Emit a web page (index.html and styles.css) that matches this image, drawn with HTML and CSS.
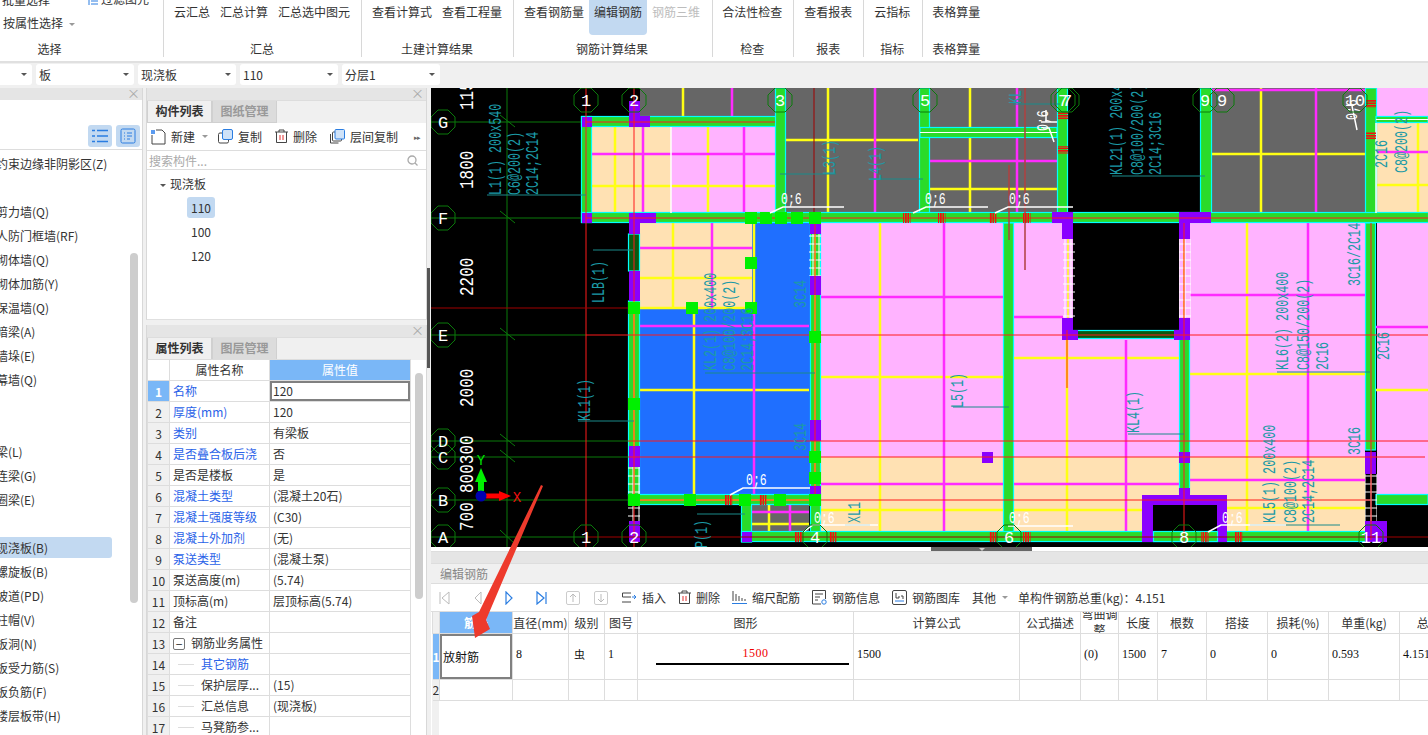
FILE: index.html
```html
<!DOCTYPE html>
<html lang="zh-CN">
<head>
    <meta charset="UTF-8">
    <title>编辑钢筋</title>
    <link rel="stylesheet" href="styles.css">
</head>
<body>
    <!-- 顶部功能区 -->
    <div class="ribbon">
        <div class="group group-select">
            <div class="select-rows">
                <div class="select-row select-row-top"><span>批量选择</span>
                    <span class="filter-item"><svg width="11" height="12" viewBox="0 0 11 12"><path d="M1 0v12M3 2h7M3 5h7M3 8h7M3 11h7" stroke="#2a7de1" fill="none"/></svg>过滤图元</span>
                </div>
                <div class="select-row">按属性选择<i class="caret"></i></div>
            </div>
            <div class="group-name">选择</div>
        </div>
        <div class="group">
            <div class="btns"><span class="btn">云汇总</span><span class="btn">汇总计算</span><span class="btn">汇总选中图元</span></div>
            <div class="group-name">汇总</div>
        </div>
        <div class="group">
            <div class="btns"><span class="btn">查看计算式</span><span class="btn">查看工程量</span></div>
            <div class="group-name">土建计算结果</div>
        </div>
        <div class="group group-wide">
            <div class="btns"><span class="btn">查看钢筋量</span><span class="btn active">编辑钢筋</span><span class="btn disabled">钢筋三维</span></div>
            <div class="group-name">钢筋计算结果</div>
        </div>
        <div class="group group-tight">
            <div class="btns"><span class="btn">合法性检查</span></div>
            <div class="group-name">检查</div>
        </div>
        <div class="group">
            <div class="btns"><span class="btn">查看报表</span></div>
            <div class="group-name">报表</div>
        </div>
        <div class="group group-wide">
            <div class="btns"><span class="btn">云指标</span></div>
            <div class="group-name">指标</div>
        </div>
        <div class="group last">
            <div class="btns"><span class="btn">表格算量</span></div>
            <div class="group-name">表格算量</div>
        </div>
    </div>

    <!-- 下拉条 -->
    <div class="combo-bar">
        <div class="combo combo-first"><i class="caret dark"></i></div>
        <div class="combo">板<i class="caret dark"></i></div>
        <div class="combo">现浇板<i class="caret dark"></i></div>
        <div class="combo">110<i class="caret dark"></i></div>
        <div class="combo">分层1<i class="caret dark"></i></div>
    </div>

    <div class="main">
        <!-- 导航树 -->
        <div class="nav-panel">
            <div class="panel-head"><span class="close">×</span></div>
            <div class="nav-tools">
                <span class="tool-toggle"><svg width="16" height="14" viewBox="0 0 16 14"><path d="M0 1.500h3M5 1.500h11M0 7h3M5 7h11M0 12.500h3M5 12.500h11" stroke="#2a7de1" fill="none" stroke-width="1.400"/></svg></span>
                <span class="tool-toggle"><svg width="16" height="16" viewBox="0 0 16 16"><rect x="1" y="1" width="14" height="14" rx="1.500" stroke="#2a7de1" fill="none"/><path d="M4 5h1M7 5h5M4 8h1M7 8h5M4 11h1M7 11h3" stroke="#2a7de1" fill="none"/></svg></span>
            </div>
            <ul class="nav-list">
                <li>约束边缘非阴影区(Z)</li>
                <li>&nbsp;</li>
                <li>剪力墙(Q)</li>
                <li>人防门框墙(RF)</li>
                <li>砌体墙(Q)</li>
                <li>砌体加筋(Y)</li>
                <li>保温墙(Q)</li>
                <li>暗梁(A)</li>
                <li>墙垛(E)</li>
                <li>幕墙(Q)</li>
                <li>&nbsp;</li>
                <li>&nbsp;</li>
                <li>梁(L)</li>
                <li>连梁(G)</li>
                <li>圈梁(E)</li>
                <li>&nbsp;</li>
                <li class="selected">现浇板(B)</li>
                <li>螺旋板(B)</li>
                <li>坡道(PD)</li>
                <li>柱帽(V)</li>
                <li>板洞(N)</li>
                <li>板受力筋(S)</li>
                <li>板负筋(F)</li>
                <li>楼层板带(H)</li>
            </ul>
            <div class="nav-scroll"></div>
        </div>

        <!-- 构件列表 + 属性列表 -->
        <div class="mid-col">
            <div class="panel panel-parts">
                <div class="panel-head"><span class="close">×</span></div>
                <div class="tabs"><span class="tab on">构件列表</span><span class="tab">图纸管理</span></div>
                <div class="parts-tools">
                    <span class="ptool"><svg width="15" height="16" viewBox="0 0 15 16"><rect x="0" y="1" width="4" height="4" fill="#5b9bf0"/><path d="M1 6v9h13V4l-3-3H5" stroke="#444" fill="none"/></svg>新建<i class="caret"></i></span>
                    <span class="ptool"><svg width="15" height="15" viewBox="0 0 15 15"><rect x="0.500" y="4" width="10" height="10" rx="1.500" stroke="#444" fill="#fff"/><rect x="4.500" y="0.500" width="10" height="10" rx="1.500" stroke="#2a7de1" fill="#cfe2f8"/></svg>复制</span>
                    <span class="ptool"><svg width="13" height="15" viewBox="0 0 13 15"><path d="M0 3h13M4 3V1h5v2M1.500 3v10.500h10V3" stroke="#444" fill="none"/><path d="M5 6v5M8 6v5" stroke="#e23030" fill="none"/></svg>删除</span>
                    <span class="ptool"><svg width="15" height="15" viewBox="0 0 15 15"><path d="M0.500 5v9h8" stroke="#444" fill="none"/><rect x="2.500" y="3" width="9" height="9" rx="1" stroke="#444" fill="#fff"/><rect x="5" y="0.500" width="9.500" height="9.500" rx="1" stroke="#2a7de1" fill="#cfe2f8"/></svg>层间复制</span>
                    <span class="more">▸▸</span>
                </div>
                <div class="search">
                    <span>搜索构件...</span>
                    <svg width="11" height="11" viewBox="0 0 11 11"><circle cx="5" cy="5" r="4" stroke="#aaa" fill="none" stroke-width="1.300"/><path d="M8 8l2.500 2.500" stroke="#aaa" stroke-width="1.300"/></svg>
                </div>
                <div class="part-tree">
                    <div class="tree-root"><i class="caret dark"></i>现浇板</div>
                    <div class="tree-leaf"><span class="leaf on">110</span></div>
                    <div class="tree-leaf"><span class="leaf">100</span></div>
                    <div class="tree-leaf"><span class="leaf">120</span></div>
                </div>
            </div>
            <div class="panel panel-props">
                <div class="panel-head"><span class="close">×</span></div>
                <div class="tabs"><span class="tab on">属性列表</span><span class="tab">图层管理</span></div>
                <div class="props-wrap">
                    <table class="props">
                        <colgroup><col class="c-no"><col class="c-name"><col class="c-val"></colgroup>
                        <tr class="head"><th></th><th>属性名称</th><th class="cur-col">属性值</th></tr>
                        <tr><td class="no cur-no">1</td><td class="blue">名称</td><td class="cur-cell">120</td></tr>
                        <tr><td class="no">2</td><td class="blue">厚度(mm)</td><td>120</td></tr>
                        <tr><td class="no">3</td><td class="blue">类别</td><td>有梁板</td></tr>
                        <tr><td class="no">4</td><td class="blue">是否叠合板后浇</td><td>否</td></tr>
                        <tr><td class="no">5</td><td>是否是楼板</td><td>是</td></tr>
                        <tr><td class="no">6</td><td class="blue">混凝土类型</td><td>(混凝土20石)</td></tr>
                        <tr><td class="no">7</td><td class="blue">混凝土强度等级</td><td>(C30)</td></tr>
                        <tr><td class="no">8</td><td class="blue">混凝土外加剂</td><td>(无)</td></tr>
                        <tr><td class="no">9</td><td class="blue">泵送类型</td><td>(混凝土泵)</td></tr>
                        <tr><td class="no">10</td><td>泵送高度(m)</td><td>(5.74)</td></tr>
                        <tr><td class="no">11</td><td>顶标高(m)</td><td>层顶标高(5.74)</td></tr>
                        <tr><td class="no">12</td><td>备注</td><td></td></tr>
                        <tr><td class="no">13</td><td><span class="minus">−</span>钢筋业务属性</td><td></td></tr>
                        <tr><td class="no">14</td><td class="sub blue">其它钢筋</td><td></td></tr>
                        <tr><td class="no">15</td><td class="sub">保护层厚...</td><td>(15)</td></tr>
                        <tr><td class="no">16</td><td class="sub">汇总信息</td><td>(现浇板)</td></tr>
                        <tr><td class="no">17</td><td class="sub">马凳筋参...</td><td></td></tr>
                    </table>
                    <div class="props-scroll"></div>
                </div>
            </div>
        </div>

        <div class="right-col">
            <!-- 绘图区 -->
            <svg class="cad" width="997" height="459" viewBox="431 88 997 459">
                <defs>
                    <polygon id="oct" points="-5,-12 5,-12 12,-5 12,5 5,12 -5,12 -12,5 -12,-5"/>
                    <pattern id="ladder" width="12" height="8" patternUnits="userSpaceOnUse">
                        <path d="M0 4h12M3 0v8M9 0v8" stroke="#fff" fill="none"/>
                    </pattern>
                    <pattern id="stripes-v" width="2.500" height="10" patternUnits="userSpaceOnUse">
                        <rect width="1.700" height="10" fill="#ee1111"/>
                    </pattern>
                    <pattern id="stripes-h" width="10" height="2.500" patternUnits="userSpaceOnUse">
                        <rect width="10" height="1.700" fill="#ee1111"/>
                    </pattern>
                </defs>
                <rect x="431" y="88" width="997" height="459" fill="#000"/>

                <!-- 板 -->
                <rect class="grey" x="640" y="88" width="135" height="30"/>
                <rect class="grey" x="786" y="88" width="271" height="125"/>
                <rect class="grey" x="1212" y="88" width="153" height="125"/>
                <rect class="orange" x="592" y="127" width="79" height="86"/>
                <rect class="pink" x="671" y="127" width="104" height="86"/>
                <rect class="pink" x="1377" y="88" width="51" height="28"/>
                <rect class="orange" x="1377" y="123" width="51" height="90"/>
                <rect class="orange" x="640" y="223" width="112" height="85"/>
                <rect class="blue-slab" x="752" y="223" width="58" height="85"/>
                <rect class="blue-slab" x="640" y="308" width="170" height="187"/>
                <rect class="pink" x="821" y="223" width="182" height="234"/>
                <rect class="orange" x="821" y="457" width="182" height="75"/>
                <rect class="pink" x="1014" y="223" width="351" height="234"/>
                <rect class="orange" x="1014" y="457" width="351" height="75"/>
                <rect class="pink" x="1377" y="223" width="51" height="272"/>
                <rect class="grey" x="751" y="505" width="58" height="27"/>
                <rect fill="#000" x="1073" y="223" width="106" height="107"/>

                <!-- 钢筋 黄 -->
                <path class="yellow" d="M615 127V213M708 127V213M588 186H775M683 88V116M828 88V213M786 140H918M970 88V213M930 189H1057M1261 88V213M1212 154H1365M1418 123V213M1376 185H1428
                    M673 223V308M635 278H752M640 308H752M754 223V308M694 308V494M635 390H809M880 223V532M821 377H1003M821 510H1003
                    M1014 358H1179M1067 333V532M1014 510H1142M1247 223V532M1190 374H1365M1190 508H1365M1376 390H1428M769 505V531M751 524H809"/>
                <!-- 钢筋 紫红 -->
                <path class="magenta" d="M643 122V213M744 122V213M592 154H775M732 88V116M875 88V213M1017 88V213M930 161H1057M1316 88V213M1212 90H1365M1376 152H1428
                    M712 223V308M635 248H752M754 308V494M635 326H809M821 297H1003M944 223V532M821 484H1003M1126 340V532M1014 484H1179
                    M1308 223V532M1190 295H1365M1190 480H1365M1376 327H1428M1014 317H1063M790 505V531M751 512H809"/>

                <!-- 梁 -->
                <rect class="beam" x="581.500" y="116.500" width="198" height="10"/>
                <rect class="beam" x="581.500" y="116.500" width="10" height="106"/>
                <rect class="beam" x="775.500" y="88" width="10" height="125"/>
                <rect class="beam" x="919.500" y="88" width="10" height="125"/>
                <rect class="beam" x="920" y="127.500" width="137" height="10"/>
                <rect class="beam" x="1057.500" y="88" width="10" height="125"/>
                <rect class="beam" x="1200.500" y="88" width="11" height="125"/>
                <rect class="beam" x="1365.500" y="88" width="11" height="125"/>
                <rect class="beam" x="1376" y="116.500" width="52" height="6"/>
                <rect class="beam" x="581.500" y="212.500" width="847" height="10"/>
                <rect class="beam dark-beam" x="628.500" y="234" width="11" height="37"/>
                <rect class="beam" x="628.500" y="301" width="11" height="194"/>
                <rect class="beam" x="810.500" y="223" width="10" height="309"/>
                <rect class="beam" x="628.500" y="494.500" width="192" height="10"/>
                <rect class="beam" x="1003.500" y="223" width="10" height="309"/>
                <rect class="beam" x="1179.500" y="338" width="10" height="155"/>
                <rect class="beam" x="1365.500" y="223" width="10" height="227"/>
                <rect class="beam" x="1376" y="494.500" width="52" height="10"/>
                <rect class="beam" x="741.500" y="505" width="10" height="37"/>
                <rect class="beam" x="741.500" y="531.500" width="624" height="10"/>
                <rect class="beam dark-beam" x="1073.500" y="330.500" width="106" height="8"/>

                <!-- 梁内钢筋 -->
                <path class="yellow-thin" d="M634 271V495M815 223V495M628 500H815M1068 223V333M1184 223V330"/>
                <path class="white-thin" d="M920 132.500H1057M1376 119.500H1428"/>

                <!-- 柱/暗柱 紫 -->
                <path class="purple" d="M582 117h10v10h-10zM629 101h11v15h10v11h-21zM582 213h10v10h-10zM629 213h27v10h-16v11h-11z
                    M1052 212h21v27h-11v-16h-10zM1179 212h32v11h-21v16h-11z
                    M1062 318h11v12h5v10h-16zM1179 318h11v22h-16v-10h5z
                    M629 271h11v30h-11zM629 446h11v21h-11zM810 223h11v11h-11zM810 276h11v19h-11zM810 420h11v21h-11zM810 486h11v9h-11z
                    M629 521h11v21h-11zM742 532h10v10h-10zM1179 452h11v11h-11zM982 452h11v11h-11zM1365 452h11v22h-11zM1365 521h22v21h-22z"/>
                <path class="purple" d="M1142 495h37v-7h11v7h37v47h-10v-37h-64v37h-11z"/>
                <rect fill="#000" x="1153" y="505" width="64" height="26"/>
                <rect class="beam" x="1153.500" y="531.500" width="64" height="10"/>
                <rect fill="url(#ladder)" x="628" y="467" width="12" height="28"/>
                <rect fill="url(#ladder)" x="628" y="505" width="12" height="16"/>
                <rect fill="url(#ladder)" x="1063" y="239" width="12" height="79"/>
                <rect fill="url(#ladder)" x="1179" y="239" width="12" height="79"/>
                <rect fill="url(#ladder)" x="1365" y="474" width="12" height="47"/>
                <rect fill="url(#ladder)" x="809" y="234" width="12" height="42"/>

                <!-- 轴网 -->
                <path class="axis" d="M507 88V547M431 122H581M431 218H581M431 335H586M431 441H628M431 457H628M431 500H628M431 537H586M500 115l15 12M500 211l15 12M500 328l15 12M500 434l15 12M500 450l15 12M500 530l15 14"/>
                <path class="red" d="M586 88V547M634 88V547M586 122H775M586 218H1428M586 335H1428M628 441H1428M628 457H1425M628 500H1370M1184 223V542M1371 223V540M815 223V505M1067 330V388"/>
                <path class="darkred" d="M431 308H628M586 537H1428M814 88V213"/>
                <path class="brown" d="M1009 165V240M1025 88V270"/>
                <path class="white-line" d="M671 127V213M1376 123V213M1046 110V122M1041 122H1057"/>

                <!-- 搭接 -->
                <g class="tie-v">
                    <rect x="903" y="213" width="7.500" height="10"/><rect x="938" y="213" width="7.500" height="10"/><rect x="989" y="213" width="7.500" height="10"/><rect x="1023" y="213" width="7.500" height="10"/>
                    <rect x="725" y="495" width="7.500" height="10"/><rect x="759" y="495" width="7.500" height="10"/>
                    <rect x="795" y="532" width="7.500" height="10"/><rect x="829" y="532" width="7.500" height="10"/><rect x="989" y="532" width="7.500" height="10"/><rect x="1023" y="532" width="7.500" height="10"/><rect x="1201" y="532" width="7.500" height="10"/><rect x="1235" y="532" width="7.500" height="10"/>
                </g>
                <g class="tie-h">
                    <rect x="1058" y="112" width="10" height="7.500"/><rect x="1058" y="146" width="10" height="7.500"/><rect x="1366" y="100" width="10" height="7.500"/><rect x="1366" y="132" width="10" height="7.500"/>
                </g>

                <!-- 选中夹点 -->
                <g class="handle">
                    <rect x="745" y="212" width="12" height="12"/><rect x="760" y="212" width="12" height="12"/><rect x="775" y="212" width="12" height="12"/><rect x="791" y="212" width="12" height="12"/><rect x="809" y="212" width="12" height="12"/>
                    <rect x="745" y="257" width="12" height="12"/><rect x="628" y="302" width="12" height="12"/><rect x="686" y="302" width="12" height="12"/><rect x="745" y="302" width="12" height="12"/>
                    <rect x="809" y="331" width="12" height="12"/><rect x="628" y="398" width="12" height="12"/><rect x="809" y="451" width="12" height="12"/><rect x="809" y="472" width="12" height="12"/>
                    <rect x="628" y="494" width="12" height="12"/><rect x="684" y="494" width="12" height="12"/><rect x="739" y="494" width="12" height="12"/><rect x="774" y="494" width="12" height="12"/><rect x="809" y="494" width="12" height="12"/>
                </g>

                <!-- 引线 -->
                <path class="lead-dark" d="M487 195H586M593 250H633M578 421H634M705 373H815M780 174H836M870 179H923M1013 104H1060M1112 176H1205M1277 372H1370M953 407H1009M1128 434H1184M1250 525H1340M845 525H870M697 514H745"/>

                <!-- 原位标注 -->
                <g class="white-line">
                    <path d="M770 213l13-6H844M913 213l13-6H988M995 213l13-6H1073M1043 128h6l5 14M1352 106l5 24"/>
                    <path d="M730 495l13-7H810M803 532l10-7H878M1008 526H1073M1208 532l13-7H1286"/>
                </g>
                <g class="note">
                    <text transform="translate(781 204) scale(.72 1)">0;6</text>
                    <text transform="translate(925 204) scale(.72 1)">0;6</text>
                    <text transform="translate(1009 204) scale(.72 1)">0;6</text>
                    <text transform="translate(746 485) scale(.72 1)">0;6</text>
                    <text transform="translate(814 523) scale(.72 1)">0;6</text>
                    <text transform="translate(1009 523) scale(.72 1)">0;6</text>
                    <text transform="translate(1222 523) scale(.72 1)">0;6</text>
                    <text transform="translate(1048 131) rotate(-90) scale(.72 1)">0;6</text>
                    <text transform="translate(1357 120) rotate(-90) scale(.72 1)">0;6</text>
                </g>

                <!-- 标高尺寸 -->
                <g class="dim">
                    <text transform="translate(473 110) rotate(-90) scale(.8 1)">115</text>
                    <text transform="translate(473 189) rotate(-90) scale(.8 1)">1800</text>
                    <text transform="translate(473 296) rotate(-90) scale(.8 1)">2200</text>
                    <text transform="translate(473 407) rotate(-90) scale(.8 1)">2000</text>
                    <text transform="translate(473 493) rotate(-90) scale(.8 1)">800300</text>
                    <text transform="translate(473 531) rotate(-90) scale(.8 1)">700</text>
                </g>

                <!-- 梁标注 -->
                <g class="teal">
                    <text transform="translate(501 195) rotate(-90) scale(.65 1)"><tspan x="0">L1(1) 200x540</tspan><tspan x="0" dy="19">C6@200(2)</tspan><tspan x="0" dy="18">2C14;2C14</tspan></text>
                    <text transform="translate(604 303) rotate(-90) scale(.65 1)">LLB(1)</text>
                    <text transform="translate(590 421) rotate(-90) scale(.65 1)">KL1(1)</text>
                    <text transform="translate(716 371) rotate(-90) scale(.65 1)"><tspan x="0">KL2(1) 200x400</tspan><tspan x="0" dy="19">C8@100/200(2)</tspan><tspan x="0" dy="18">2C14;3C16</tspan></text>
                    <text transform="translate(835 175) rotate(-90) scale(.65 1)">L3(1)</text>
                    <text transform="translate(881 181) rotate(-90) scale(.65 1)">L4(1)</text>
                    <text transform="translate(1021 104) rotate(-90) scale(.65 1)">KL</text>
                    <text transform="translate(1122 175) rotate(-90) scale(.65 1)"><tspan x="0">KL21(1) 200x400</tspan><tspan x="0" dy="21">C8@100/200(2)</tspan><tspan x="0" dy="18">2C14;3C16</tspan></text>
                    <text transform="translate(1387 168) rotate(-90) scale(.65 1)">2C16</text>
                    <text transform="translate(1407 173) rotate(-90) scale(.65 1)">C8@200(2)</text>
                    <text transform="translate(1360 286) rotate(-90) scale(.65 1)">3C16/2C14</text>
                    <text transform="translate(1288 370) rotate(-90) scale(.65 1)"><tspan x="0">KL6(2) 200x400</tspan><tspan x="0" dy="21">C8@150/200(2)</tspan><tspan x="0" dy="19">2C16</tspan></text>
                    <text transform="translate(1389 360) rotate(-90) scale(.65 1)">2C16</text>
                    <text transform="translate(963 408) rotate(-90) scale(.65 1)">L5(1)</text>
                    <text transform="translate(1139 433) rotate(-90) scale(.65 1)">KL4(1)</text>
                    <text transform="translate(1360 455) rotate(-90) scale(.65 1)">3C16</text>
                    <text transform="translate(1275 523) rotate(-90) scale(.65 1)"><tspan x="0">KL5(1) 200x400</tspan><tspan x="0" dy="21">C8@100(2)</tspan><tspan x="0" dy="18">2C14;2C14</tspan></text>
                    <text transform="translate(860 523) rotate(-90) scale(.65 1)">XL1</text>
                    <text transform="translate(806 308) rotate(-90) scale(.65 1)">3C14</text>
                    <text transform="translate(806 451) rotate(-90) scale(.65 1)">3C14</text>
                    <text transform="translate(707 548) rotate(-90) scale(.65 1)">P(1)</text>
                </g>

                <!-- 轴号 -->
                <g class="bubble">
                    <use href="#oct" x="443" y="122"/><use href="#oct" x="443" y="218"/><use href="#oct" x="443" y="335"/><use href="#oct" x="443" y="441"/><use href="#oct" x="443" y="457"/><use href="#oct" x="443" y="500"/><use href="#oct" x="443" y="537"/>
                    <use href="#oct" x="586" y="100"/><use href="#oct" x="634" y="100"/><use href="#oct" x="780" y="100"/><use href="#oct" x="925" y="100"/><use href="#oct" x="1063" y="100"/><use href="#oct" x="1067" y="100"/><use href="#oct" x="1205" y="100"/><use href="#oct" x="1222" y="100"/><use href="#oct" x="1355" y="100"/>
                    <use href="#oct" x="586" y="537"/><use href="#oct" x="634" y="537"/><use href="#oct" x="815" y="537"/><use href="#oct" x="1009" y="537"/><use href="#oct" x="1184" y="537"/><use href="#oct" x="1371" y="537"/>
                </g>
                <g class="axis-no">
                    <text x="443" y="128">G</text><text x="443" y="224">F</text><text x="443" y="341">E</text><text x="443" y="447">D</text><text x="443" y="463">C</text><text x="443" y="506">B</text><text x="443" y="543">A</text>
                    <text x="586" y="106">1</text><text x="634" y="106">2</text><text x="780" y="106">3</text><text x="925" y="106">5</text><text x="1063" y="106">7</text><text x="1067" y="106">7</text><text x="1205" y="106">9</text><text x="1222" y="106">9</text><text x="1355" y="106">10</text>
                    <text x="586" y="543">1</text><text x="634" y="543">2</text><text x="815" y="543">4</text><text x="1009" y="543">6</text><text x="1184" y="543">8</text><text x="1371" y="543">11</text>
                </g>

                <!-- 坐标系 -->
                <path d="M481 491V480" stroke="#00f000" stroke-width="6"/>
                <polygon points="481,468 475,482 487,482" fill="#00f000"/>
                <path d="M486 496H503" stroke="#ff0000" stroke-width="5"/>
                <polygon points="511,496 499,491 499,501" fill="#ff0000"/>
                <circle cx="481" cy="496" r="5.500" fill="#0000b0"/>
                <text class="ucs-y" x="481" y="465">Y</text>
                <text class="ucs-x" x="517" y="502">X</text>
            </svg>
            <div class="split-handle"></div>
            <div class="split-handle-h"><i class="caret"></i></div>

            <!-- 编辑钢筋面板 -->
            <div class="rebar-panel">
                <div class="rebar-head"></div>
                <div class="rebar-title">编辑钢筋</div>
                <div class="rebar-tools">
                    <span class="nav-btn first"><svg width="11" height="14" viewBox="0 0 11 14"><path d="M1 1v12M10 1L3 7l7 6z" stroke="#bbb" fill="none"/></svg></span>
                    <span class="nav-btn"><svg width="8" height="14" viewBox="0 0 8 14"><path d="M7 1L1 7l6 6z" stroke="#bbb" fill="none"/></svg></span>
                    <span class="nav-btn"><svg width="8" height="14" viewBox="0 0 8 14"><path d="M1 1l6 6-6 6z" stroke="#2a7de1" fill="none" stroke-width="1.200"/></svg></span>
                    <span class="nav-btn end"><svg width="11" height="14" viewBox="0 0 11 14"><path d="M10 1v12M1 1l7 6-7 6z" stroke="#2a7de1" fill="none" stroke-width="1.200"/></svg></span>
                    <span class="nav-btn box"><svg width="14" height="14" viewBox="0 0 14 14"><rect x="0.500" y="0.500" width="13" height="13" rx="1.500" stroke="#ccc" fill="none"/><path d="M7 11V3M4 6l3-3 3 3" stroke="#bbb" fill="none"/></svg></span>
                    <span class="nav-btn box"><svg width="14" height="14" viewBox="0 0 14 14"><rect x="0.500" y="0.500" width="13" height="13" rx="1.500" stroke="#ccc" fill="none"/><path d="M7 3v8M4 8l3 3 3-3" stroke="#bbb" fill="none"/></svg></span>
                    <span class="rtool"><svg width="15" height="12" viewBox="0 0 15 12"><path d="M9 1H0.500v4H9M0 10h9" stroke="#444" fill="none"/><path d="M10 5h4M12 3l2 2-2 2" stroke="#2a7de1" fill="none"/></svg>插入</span>
                    <span class="rtool"><svg width="13" height="15" viewBox="0 0 13 15"><path d="M0 3h13M4 3V1h5v2M1.500 3v10.500h10V3" stroke="#444" fill="none"/><path d="M5 6v5M8 6v5" stroke="#e23030" fill="none"/></svg>删除</span>
                    <span class="rtool"><svg width="15" height="15" viewBox="0 0 15 15"><path d="M1 1v10M4 4v7M7 6v5M10 8v3M13 9v2" stroke="#444" fill="none"/><path d="M0 13.500h15" stroke="#2a7de1" fill="none"/></svg>缩尺配筋</span>
                    <span class="rtool"><svg width="15" height="15" viewBox="0 0 15 15"><path d="M9 14H0.500V0.500h13V9" stroke="#444" fill="none"/><path d="M3 4h8M3 7h5M3 10h3" stroke="#444" fill="none"/><circle cx="12" cy="12" r="2.200" stroke="#2a7de1" fill="none"/></svg>钢筋信息</span>
                    <span class="rtool"><svg width="15" height="15" viewBox="0 0 15 15"><rect x="0.500" y="0.500" width="14" height="14" rx="1.500" stroke="#444" fill="none"/><path d="M4 3v5h3V6M9 6h2v3" stroke="#444" fill="none"/><path d="M3 11h9" stroke="#2a7de1" fill="none"/></svg>钢筋图库</span>
                    <span class="rtool other">其他<i class="caret"></i></span>
                    <span class="total">单构件钢筋总重(kg)：4.151</span>
                </div>
                <div class="grid-wrap">
                    <table class="rebar-grid">
                        <colgroup>
                            <col class="w7"><col class="w73"><col class="w56"><col class="w36"><col class="w33"><col class="w216"><col class="w166"><col class="w61"><col class="w38"><col class="w39"><col class="w49"><col class="w61"><col class="w61"><col class="w71"><col class="w80">
                        </colgroup>
                        <tr class="head">
                            <th></th><th class="cur-col">筋号</th><th>直径(mm)</th><th>级别</th><th>图号</th><th>图形</th><th>计算公式</th><th>公式描述</th>
                            <th class="wrap-th"><div>弯曲调整</div></th><th>长度</th><th>根数</th><th>搭接</th><th>损耗(%)</th><th>单重(kg)</th><th>总重(kg)</th>
                        </tr>
                        <tr class="row-one">
                            <td class="cur-no">1</td><td class="cur-cell cn">放射筋</td><td>8</td><td class="grade">虫</td><td>1</td>
                            <td class="shape-cell"><div class="shape">1500</div></td>
                            <td>1500</td><td></td><td>(0)</td><td>1500</td><td>7</td><td>0</td><td>0</td><td>0.593</td><td>4.151</td>
                        </tr>
                        <tr class="row-two">
                            <td class="no-two">2</td><td></td><td></td><td></td><td></td><td></td><td></td><td></td><td></td><td></td><td></td><td></td><td></td><td></td><td></td>
                        </tr>
                    </table>
                </div>
            </div>
        </div>
    </div>

    <!-- 截图上的红色箭头 -->
    <svg class="mark-arrow" width="1428" height="735" viewBox="0 0 1428 735">
        <polygon points="541,485 543,486 486,620 490,629 475,638 472,616 479,612" fill="#ee3a2c"/>
    </svg>
</body>
</html>
```

FILE: styles.css
```css
* {
    margin: 0;
    padding: 0;
    box-sizing: border-box;
}

body {
    position: relative;
    width: 1428px;
    height: 735px;
    overflow: hidden;
    font-family: "Noto Sans CJK SC", "Liberation Sans", sans-serif;
    font-size: 12px;
    color: #333;
    background: #f0f0f0;
}

.caret {
    display: inline-block;
    flex: none;
    width: 0;
    height: 0;
    border-left: 3px solid transparent;
    border-right: 3px solid transparent;
    border-top: 3px solid #999;
}

.caret.dark {
    border-top-color: #555;
}

/* ---------------------------------功能区---------------------------------- */

.ribbon {
    display: flex;
    height: 63px;
    background: #fff;
    border-bottom: 2px solid #e0e0e0;
    overflow: hidden;
}

.group {
    display: flex;
    flex-direction: column;
    height: 57px;
    padding: 0 6px 0 5px;
    border-right: 1px solid #d8d8d8;
}

.group.last {
    border-right: none;
    padding-left: 4px;
}

.group-select {
    width: 164px;
    padding: 0;
}

.group-wide {
    padding-right: 7px;
}

.group-tight {
    padding-left: 4px;
}

.btns {
    display: flex;
    flex: 1;
}

.btn {
    height: 35px;
    padding: 3px 5px 0;
    line-height: 17px;
    border-radius: 0 0 4px 4px;
}

.btn.active {
    background: #c2d9f1;
}

.btn.disabled {
    color: #bdbdbd;
}

.group-name {
    flex: none;
    height: 20px;
    margin-bottom: -2px;
    line-height: 20px;
    text-align: center;
    white-space: nowrap;
}

.group-select .group-name {
    padding-right: 64px;
}

.select-rows {
    flex: 1;
    overflow: hidden;
}

.select-row {
    height: 18px;
    padding-left: 3px;
    line-height: 18px;
    white-space: nowrap;
}

.select-row .caret {
    margin-left: 6px;
    vertical-align: 2px;
}

.select-row-top {
    display: flex;
    height: 16px;
    margin-top: -9px;
    margin-bottom: 7px;
    padding-left: 2px;
}

.filter-item {
    display: flex;
    align-items: center;
    gap: 2px;
    margin-left: 38px;
}

/* ---------------------------------下拉条---------------------------------- */

.combo-bar {
    display: flex;
    gap: 4px;
    height: 25px;
    padding-top: 1px;
    background: #f0f0f0;
}

.combo {
    display: flex;
    align-items: center;
    justify-content: space-between;
    width: 98px;
    height: 21px;
    padding: 0 5px 0 3px;
    background: #fff;
    border-radius: 3px;
}

.combo-first {
    width: 32px;
    justify-content: flex-end;
    border-radius: 0 3px 3px 0;
}

/* ---------------------------------主体---------------------------------- */

.main {
    display: flex;
    height: 647px;
}

.panel-head {
    position: relative;
    height: 12px;
    background: #e5e5e5;
}

.close {
    position: absolute;
    top: -3px;
    right: 2px;
    font-size: 13px;
    line-height: 16px;
    color: #aaa;
}

.nav-panel {
    position: relative;
    flex: none;
    width: 143px;
    margin-right: 3px;
    background: #fff;
    border-right: 1px solid #d8d8d8;
    overflow: hidden;
}

.nav-tools {
    display: flex;
    justify-content: flex-end;
    gap: 4px;
    height: 50px;
    padding: 25px 2px 0 0;
    border-bottom: 1px solid #ddd;
}

.tool-toggle {
    display: flex;
    align-items: center;
    justify-content: center;
    width: 24px;
    height: 22px;
    background: #c2d9f1;
    border-radius: 3px;
}

.nav-list {
    list-style: none;
    margin-top: 2px;
}

.nav-list li {
    height: 24px;
    line-height: 24px;
    margin-left: -4px;
    white-space: nowrap;
}

.nav-list .selected {
    position: relative;
    width: 116px;
    height: 21px;
    line-height: 21px;
    margin-top: 1px;
    margin-bottom: 2px;
    background: #c2d9f1;
    border-radius: 0 3px 3px 0;
}

.nav-scroll {
    position: absolute;
    top: 165px;
    left: 130px;
    width: 8px;
    height: 350px;
    background: #cdcdcd;
    border-radius: 4px;
}

.mid-col {
    display: flex;
    flex: none;
    flex-direction: column;
    width: 281px;
    margin-right: 4px;
}

.panel {
    background: #fff;
    border-right: 1px solid #d8d8d8;
    border-left: 1px solid #d8d8d8;
}

.panel-parts {
    height: 232px;
    border-bottom: 1px solid #e0e0e0;
}

.panel-props {
    flex: 1;
    margin-top: 5px;
    overflow: hidden;
}

.tabs {
    display: flex;
    height: 23px;
    background: #f0f0f0;
    border-top: 1px solid #ddd;
}

.tab {
    width: 65px;
    height: 22px;
    line-height: 20px;
    text-align: center;
    font-weight: 700;
    color: #999;
    background: #dcdcdc;
    border: 1px solid #d0d0d0;
    border-top: none;
}

.tab.on {
    color: #333;
    background: #f0f0f0;
}

.parts-tools {
    display: flex;
    align-items: center;
    height: 28px;
    padding-left: 4px;
    border-bottom: 1px solid #ddd;
}

.ptool {
    display: flex;
    flex: none;
    align-items: center;
    gap: 5px;
    margin-right: 13px;
    white-space: nowrap;
}

.ptool .caret {
    margin-left: 2px;
    margin-right: -3px;
}

.more {
    flex: none;
    width: 11px;
    margin-left: auto;
    margin-right: 1px;
    font-size: 7px;
    letter-spacing: -1px;
    color: #666;
}

.search {
    display: flex;
    align-items: center;
    justify-content: space-between;
    height: 19px;
    padding: 0 8px 0 2px;
    color: #aaa;
    border-bottom: 1px solid #ddd;
}

.part-tree {
    padding-top: 2px;
}

.tree-root {
    height: 25px;
    line-height: 24px;
    padding-left: 13px;
}

.tree-root .caret {
    margin-right: 4px;
    vertical-align: 2px;
}

.tree-leaf {
    height: 24px;
    padding-left: 40px;
    line-height: 21px;
}

.leaf {
    display: inline-block;
    width: 28px;
    height: 21px;
    text-align: center;
    border-radius: 3px;
}

.leaf.on {
    background: #c2d9f1;
}

.props-wrap {
    position: relative;
    margin-top: -1px;
}

.props {
    width: 263px;
    table-layout: fixed;
    border-collapse: collapse;
}

.c-no { width: 22px; }
.c-name { width: 100px; }
.c-val { width: 141px; }

.props tr {
    height: 21px;
}

.props td,
.props th {
    height: 21px;
    padding: 0 3px 1px;
    border: 1px solid #ddd;
    white-space: nowrap;
    overflow: hidden;
    font-weight: 400;
}

.props .head th {
    text-align: center;
}

.props .no {
    padding: 0;
    text-align: center;
    background: #f0f0f0;
}

.blue {
    color: #2a62e8;
}

.cur-col {
    color: #fff;
    background: #7ab7f7;
}

.props .cur-no,
.cur-no {
    color: #fff;
    font-weight: 700;
    background: #7ab7f7;
}

.cur-cell {
    box-shadow: inset 0 0 0 2px #808080;
}

.props .sub {
    padding-left: 31px;
    background: linear-gradient(#ddd, #ddd) no-repeat 8px 10px / 16px 1px;
}

.minus {
    display: inline-block;
    width: 12px;
    height: 12px;
    margin-right: 6px;
    line-height: 10px;
    text-align: center;
    border: 1px solid #777;
    border-radius: 2px;
    vertical-align: -1px;
}

.props-scroll {
    position: absolute;
    top: 14px;
    left: 268px;
    width: 8px;
    height: 226px;
    background: #cdcdcd;
    border-radius: 4px;
}

/* ---------------------------------绘图区---------------------------------- */

.right-col {
    position: relative;
    flex: none;
    width: 997px;
    background: #fff;
}

.cad {
    display: block;
}

.split-handle {
    position: absolute;
    top: 180px;
    left: -4px;
    width: 3px;
    height: 100px;
    background: #555;
}

.split-handle-h {
    position: absolute;
    top: 459px;
    left: 500px;
    display: flex;
    justify-content: center;
    width: 101px;
    height: 4px;
    background: #666;
}

.split-handle-h .caret {
    border-top-color: #ccc;
    margin-top: 1px;
}

.cad text {
    font-family: "Liberation Mono", monospace;
}

.grey { fill: #666; }
.orange { fill: #ffe1b3; }
.pink { fill: #ffb3ff; }
.blue-slab { fill: #1f6fff; }

.yellow {
    fill: none;
    stroke: #ffff14;
    stroke-width: 2.500;
}

.yellow-thin {
    fill: none;
    stroke: #ffff14;
    stroke-width: 1.500;
}

.white-thin {
    fill: none;
    stroke: #fff;
}

.magenta {
    fill: none;
    stroke: #ff2bff;
    stroke-width: 2.500;
}

.beam {
    fill: #2adb2a;
    stroke: #00ffff;
    stroke-width: 1.200;
}

.dark-beam {
    fill: #0a5a10;
}

.purple { fill: #8a00ff; }

.axis {
    fill: none;
    stroke: #0a7a0a;
}

.red {
    fill: none;
    stroke: #ff1a1a;
}

.darkred {
    fill: none;
    stroke: #a00000;
}

.brown {
    fill: none;
    stroke: #b04040;
    stroke-width: 1.500;
}

.white-line {
    fill: none;
    stroke: #fff;
    stroke-width: 1.500;
}

.tie-v { fill: url(#stripes-v); }
.tie-h { fill: url(#stripes-h); }
.handle { fill: #00f000; }

.lead-dark {
    fill: none;
    stroke: #1a8a8a;
}

.note text {
    font-size: 16px;
    fill: #fff;
}

.dim text {
    font-size: 20px;
    fill: #fff;
}

.teal text {
    font-size: 18px;
    fill: #1c9aa6;
}

.bubble {
    fill: none;
    stroke: #0a7a0a;
}

.axis-no text {
    font-size: 17px;
    fill: #fff;
    text-anchor: middle;
}

.ucs-y {
    font-size: 14px;
    fill: #00e000;
    text-anchor: middle;
}

.ucs-x {
    font-size: 14px;
    fill: #f01010;
    text-anchor: middle;
}

/* ---------------------------------编辑钢筋---------------------------------- */

.rebar-panel {
    display: flex;
    flex-direction: column;
    height: 188px;
    padding-top: 4px;
}

.rebar-head {
    height: 12px;
    background: #e5e5e5;
    border-top: 1px solid #ddd;
}

.rebar-title {
    height: 21px;
    padding-left: 9px;
    line-height: 19px;
    color: #888;
    background: #f0f0f0;
    border-top: 1px solid #ddd;
    border-bottom: 1px solid #ddd;
}

.rebar-tools {
    display: flex;
    align-items: center;
    height: 28px;
    padding-left: 8px;
    background: #fff;
    border-bottom: 1px solid #ddd;
}

.nav-btn {
    display: flex;
    flex: none;
    width: 31px;
}

.nav-btn.first {
    width: 35px;
}

.nav-btn.end {
    width: 30px;
}

.nav-btn.box {
    width: 28px;
}

.rtool {
    display: flex;
    flex: none;
    align-items: center;
    gap: 5px;
    margin-right: 12px;
    white-space: nowrap;
}

.rtool.other {
    gap: 6px;
    margin-right: 10px;
}

.total {
    white-space: nowrap;
}

.grid-wrap {
    flex: 1;
    margin-left: 1px;
    overflow: hidden;
    background: linear-gradient(90deg, #f0f0f0 7px, #fff 7px);
}

.rebar-grid {
    width: 1047px;
    table-layout: fixed;
    border-collapse: collapse;
    font-family: "Liberation Serif", "Noto Sans CJK SC", serif;
    color: #111;
}

.w7 { width: 7px; }
.w73 { width: 73px; }
.w56 { width: 56px; }
.w36 { width: 36px; }
.w33 { width: 33px; }
.w216 { width: 216px; }
.w166 { width: 166px; }
.w61 { width: 61px; }
.w38 { width: 38px; }
.w39 { width: 39px; }
.w49 { width: 49px; }
.w71 { width: 71px; }
.w80 { width: 80px; }

.rebar-grid th {
    height: 21px;
    padding: 0;
    font-family: "Noto Sans CJK SC", sans-serif;
    font-weight: 400;
    color: #333;
    white-space: nowrap;
    overflow: hidden;
    border: 1px solid #ddd;
    border-top: none;
}

.rebar-grid th.cur-col {
    color: #fff;
    font-weight: 700;
}

.wrap-th div {
    display: flex;
    align-items: center;
    height: 20px;
    white-space: normal;
    line-height: 16px;
}

.rebar-grid td {
    padding: 0 3px 4px;
    border: 1px solid #ddd;
    overflow: hidden;
    white-space: nowrap;
}

.row-one {
    height: 46px;
}

.row-two {
    height: 21px;
}

.rebar-grid td.cur-no,
.rebar-grid td.no-two {
    padding: 0;
    text-align: center;
    font-family: "Noto Sans CJK SC", sans-serif;
    border-left: none;
}

.rebar-grid td.no-two {
    background: #f0f0f0;
    color: #333;
}

.rebar-grid td.cn {
    padding: 0 3px;
    font-family: "Noto Sans CJK SC", sans-serif;
}

.rebar-grid td.grade {
    padding-left: 5px;
    font-family: "Noto Sans CJK SC", sans-serif;
    font-size: 11px;
}

.rebar-grid td.shape-cell {
    padding: 0 3px;
    vertical-align: top;
}

.shape {
    height: 19px;
    margin: 12px 1px 0 15px;
    padding-left: 6px;
    line-height: 14px;
    text-align: center;
    color: #f00000;
    border-bottom: 2px solid #000;
    letter-spacing: .5px;
}

.mark-arrow {
    position: absolute;
    top: 0;
    left: 0;
    pointer-events: none;
}
```
